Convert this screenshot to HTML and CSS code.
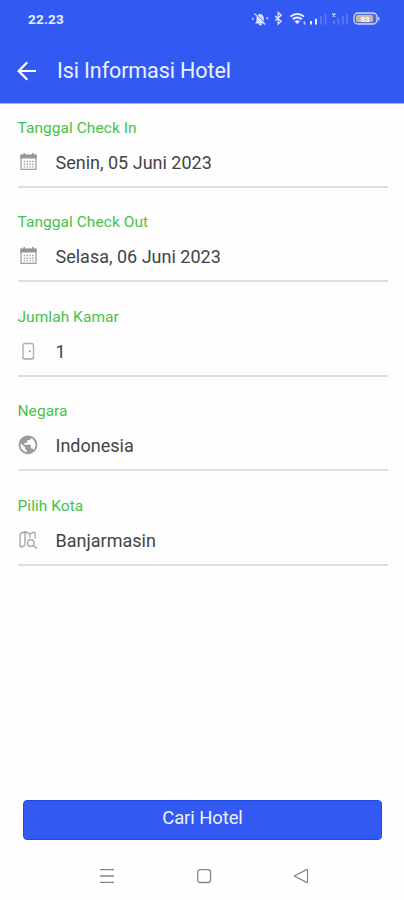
FILE: index.html
```html
<!DOCTYPE html>
<html lang="id">
<head>
<meta charset="utf-8">
<title>Isi Informasi Hotel</title>
<link rel="stylesheet" href="styles.css">
</head>
<body>
<div class="screen">
  <header class="header">
    <div class="status">
      <span class="time">22.23</span>
      <svg class="status-icons" width="130" height="20" viewBox="0 0 130 20" fill="none">
        <g fill="#dfe6ff">
          <path d="M5.500 12.500V9.500C5.500 6.500 7 5 9 5s3.800 1.500 3.800 4.500v3l1.700 2H4z"/>
          <circle cx="9.300" cy="15.300" r="1.300"/>
        </g>
        <path d="M4 3.800 14.800 14.800" stroke="#3359f3" stroke-width="1"/>
        <path d="M3.300 4.300 14.200 15.500M1.800 8.500v2.500M16.200 8v2.500" stroke="#dfe6ff" stroke-width="1.200"/>
        <path d="m24.200 7 6 5.200-3 2.800V3.500l3 2.700-6 5.200" stroke="#dfe6ff" stroke-width="1.300"/>
        <path d="M39.500 7.600a9.800 9.800 0 0 1 13.500 0M41.800 10.300a6.400 6.400 0 0 1 9 0" stroke="#e8edff" stroke-width="2"/>
        <path d="m43.600 12.200q2.700-2 5.400 0L46.300 15.200z" fill="#e8edff"/>
        <path d="M53.500 12.500v3.200" stroke="#b8c7ff" stroke-width="1.700"/>
        <path d="M60 12v3.500M65 9.800v5.700" stroke="#e8edff" stroke-width="2"/>
        <path d="M70 7v8.500M74.500 4.500v11M83 11.500v4M87.500 9.500v6M92 7v8.500M96 4.500v11" stroke="#6480f7" stroke-width="1.400"/>
        <path d="m81.300 4.500 3 3M84.300 4.500l-3 3" stroke="#dfe6ff" stroke-width="1.200"/>
        <rect x="103" y="4" width="23" height="11" rx="3.800" fill="#526bd6" stroke="#cbd7ff" stroke-width="1.300"/>
        <rect x="105" y="6" width="17" height="7" rx="2" fill="#c9b9ab"/>
        <path d="M127.700 8v3.500" stroke="#cbd7ff" stroke-width="1.300"/>
        <text x="109.500" y="12.500" class="battery">83</text>
      </svg>
    </div>
    <div class="toolbar">
      <svg class="back" width="20" height="20" viewBox="0 0 20 20" fill="none" stroke="#fff" stroke-width="2.200"><path d="M19 10H2M10.300 1.300 1.700 10l8.600 8.700"/></svg>
      <h1 class="title">Isi Informasi Hotel</h1>
    </div>
  </header>
  <main class="form">
    <section class="field">
      <div class="label">Tanggal Check In</div>
      <div class="row">
        <svg class="icon" width="20" height="20" viewBox="0 0 20 20"><use href="#calendar"/></svg>
        <span class="value">Senin, 05 Juni 2023</span>
      </div>
    </section>
    <section class="field">
      <div class="label">Tanggal Check Out</div>
      <div class="row">
        <svg class="icon" width="20" height="20" viewBox="0 0 20 20"><use href="#calendar"/></svg>
        <span class="value">Selasa, 06 Juni 2023</span>
      </div>
    </section>
    <section class="field">
      <div class="label">Jumlah Kamar</div>
      <div class="row">
        <svg class="icon" width="20" height="20" viewBox="0 0 20 20" fill="none"><rect x="5" y="2.500" width="10.500" height="15.500" rx="2" stroke="#b0b0b0" stroke-width="1.400"/><path d="M4.300 17.700h12" stroke="#b0b0b0" stroke-width="1"/><circle cx="12" cy="10.300" r="1.100" fill="#a0a0a0"/></svg>
        <span class="value">1</span>
      </div>
    </section>
    <section class="field">
      <div class="label">Negara</div>
      <div class="row">
        <svg class="icon" width="20" height="20" viewBox="1.300 1.500 21.400 21.400" fill="#9c9c9c"><path d="M12 2C6.480 2 2 6.480 2 12s4.480 10 10 10 10-4.480 10-10S17.520 2 12 2zm-1 17.930c-3.950-.49-7-3.850-7-7.930 0-.62.080-1.210.21-1.790L9 15v1c0 1.100.9 2 2 2v1.930zm6.900-2.540c-.26-.81-1-1.390-1.900-1.390h-1v-3c0-.55-.45-1-1-1H8v-2h2c.55 0 1-.45 1-1V7h2c1.100 0 2-.9 2-2v-.41c2.930 1.190 5 4.060 5 7.410 0 2.080-.8 3.970-2.100 5.390z"/></svg>
        <span class="value">Indonesia</span>
      </div>
    </section>
    <section class="field">
      <div class="label">Pilih Kota</div>
      <div class="row">
        <svg class="icon" width="20" height="20" viewBox="0 0 20 20" fill="none" stroke="#a0a0a0" stroke-width="1.300"><path d="M7 15.300 3.800 16.800q-1.700.5-1.700-1V4.500q0-1 1-1.400L7 1.800l5 2 3.500-1.500q1.500-.4 1.500 1V8.500M7 1.800v13.500M12 3.800v4"/><circle cx="12.800" cy="13" r="3.300"/><path d="m15.300 15.400 3.500 3"/></svg>
        <span class="value">Banjarmasin</span>
      </div>
    </section>
  </main>
  <footer class="footer">
    <button class="submit">Cari Hotel</button>
  </footer>
  <nav class="nav">
    <svg width="16" height="16" viewBox="0 0 16 16" fill="none" stroke="#858585" stroke-width="1.300"><path d="M1 1.700h14M1 8h14M1 14.300h14"/></svg>
    <svg width="16" height="16" viewBox="0 0 16 16" fill="none" stroke="#858585" stroke-width="1.300"><rect x="1.700" y="1.700" width="12.800" height="12.800" rx="2.500"/></svg>
    <svg width="16" height="16" viewBox="0 0 16 16" fill="none" stroke="#858585" stroke-width="1.200" stroke-linejoin="round"><path d="M1.200 8 13.500 1.600q1-.3 1 .8v11.200q0 1.100-1 .8z"/></svg>
  </nav>
</div>
<svg class="defs" width="0" height="0"><defs>
  <g id="calendar">
    <path d="M3 3.500h15v13.800H3z" fill="none" stroke="#a0a0a0" stroke-width="1.300"/>
    <path d="M2.400 2.500h16.200v4H2.400zM5.500 1H7v2H5.500zM14 1h1.500v2H14z" fill="#969696"/>
    <path d="M5.700 9.500h10M5.700 12.200h10M5.700 14.900h10" stroke="#a5a5a5" stroke-width="1.400" stroke-dasharray="1.500 1.300"/>
  </g>
</defs></svg>
</body>
</html>
```

FILE: styles.css
```css
body {
  margin: 0;
  background: #fefefe;
  font-family: Roboto, "Liberation Sans", sans-serif;
}
.screen {
  display: flex;
  flex-direction: column;
  width: 404px;
  height: 900px;
  overflow: hidden;
}
.header {
  height: 103px;
  background: #3359f3;
  border-bottom: 1px solid #a5b5f8;
  color: #fff;
}
.status {
  display: flex;
  align-items: center;
  justify-content: space-between;
  height: 38px;
  padding: 0 23px 0 28px;
}
.time {
  font-size: 13.5px;
  font-weight: 700;
  letter-spacing: 0.2px;
  color: #e8edff;
}
.battery {
  font-size: 8px;
  font-weight: 700;
  fill: #fff;
}
.toolbar {
  display: flex;
  align-items: center;
  gap: 20px;
  height: 65px;
  padding-left: 17px;
}
.title {
  margin: 0;
  font-size: 21.5px;
  font-weight: 400;
  line-height: 28px;
  letter-spacing: -0.1px;
  color: #edf1ff;
}
.form {
  flex: 1;
  padding: 0 16px 0 17.5px;
}
.field {
  box-sizing: border-box;
  height: 94.5px;
  padding-top: 13.5px;
}
.label {
  font-size: 15.5px;
  line-height: 20px;
  letter-spacing: 0.05px;
  color: #45c34b;
}
.row {
  display: flex;
  align-items: center;
  gap: 18px;
  height: 48px;
  border-bottom: 2px solid #dedede;
}
.value {
  padding-top: 1px;
  font-size: 18px;
  letter-spacing: 0;
  color: #444;
}
.footer {
  box-sizing: border-box;
  height: 66px;
  padding: 13px 22px 0 23px;
  border-top: 1px solid #f8f8f8;
}
.submit {
  display: block;
  width: 100%;
  height: 40px;
  padding: 0 0 4px;
  border: 1px solid #2349e3;
  border-radius: 4px;
  background: #3359f3;
  font-family: inherit;
  font-size: 18.500px;
  letter-spacing: -0.1px;
  color: #edf1ff;
}
.nav {
  display: flex;
  justify-content: space-between;
  height: 32px;
  padding: 16px 95px 0 99px;
}
.defs {
  position: absolute;
}
```
